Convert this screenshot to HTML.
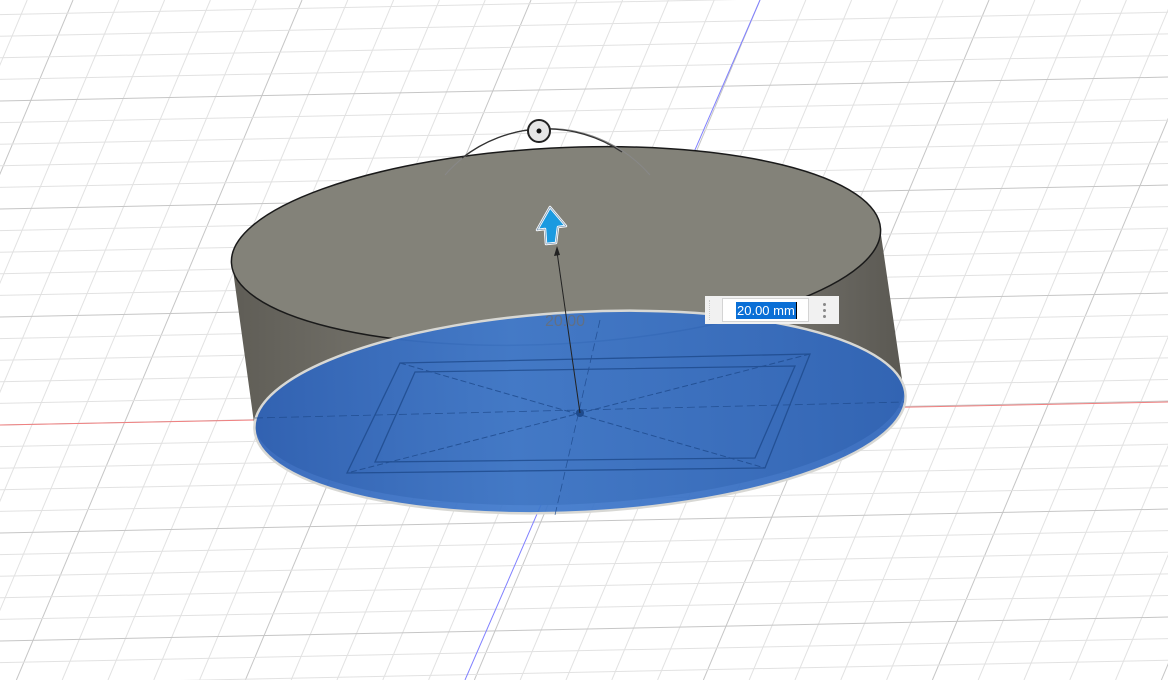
<!DOCTYPE html>
<html><head><meta charset="utf-8"><style>
html,body{margin:0;padding:0;width:1168px;height:680px;overflow:hidden;background:#fff;position:relative}
svg{position:absolute;left:0;top:0;display:block}
#box{position:absolute;left:705px;top:296px;width:134px;height:28px;background:#f1f1f1}
#fld{position:absolute;left:17px;top:2px;width:85px;height:22px;background:#fff;border:1px solid #d4d4d4}
#sel{position:absolute;left:13px;top:3px;height:17px;padding:0 1px;background:#0a6fd6;color:#fff;font:13px/17px "Liberation Sans",sans-serif;border-right:1.5px solid #000}
.d{position:absolute;left:118px;width:3px;height:3px;border-radius:50%;background:#888}
#grip{position:absolute;left:4px;top:4px;width:4px;height:20px;border-left:1px dotted #ccc}
</style></head><body>
<svg id="s" width="1168" height="680" viewBox="0 0 1168 680">
<defs>
<linearGradient id="side" x1="0" x2="1"><stop offset="0" stop-color="#5f5d56"/><stop offset="0.35" stop-color="#7e7c74"/><stop offset="0.8" stop-color="#74726b"/><stop offset="1" stop-color="#5a5852"/></linearGradient>
<linearGradient id="blue" x1="0" x2="1"><stop offset="0" stop-color="#2e62b8"/><stop offset="0.4" stop-color="#3f79cc"/><stop offset="1" stop-color="#2f65ba"/></linearGradient>
</defs>
<g id="grid"></g>
<line x1="0" y1="425" x2="1168" y2="402" stroke="#f08080" stroke-width="1"/>
<line x1="760" y1="0" x2="465" y2="680" stroke="#8080ff" stroke-width="1"/>
<path d="M232,263 L255,430 A326,100 -3 0 0 904,393 L880,228 A325,98 -3 0 1 232,263 Z" fill="url(#side)"/>
<ellipse cx="556" cy="246" rx="325" ry="98" transform="rotate(-3 556 246)" fill="#838279" stroke="#1a1a1a" stroke-width="1.5"/>
<ellipse cx="580" cy="412" rx="326" ry="100" transform="rotate(-3 580 412)" fill="url(#blue)" fill-opacity="0.93" stroke="#d8d8d4" stroke-width="2.5"/>
<g fill="none" stroke="#1e4a8c" stroke-width="1.3" opacity="0.8">
<path d="M400,363 L810,354 L765,468 L347,473 Z"/>
<path d="M415,372 L795,366 L755,458 L375,462 Z"/>
<path d="M400,363 L765,468 M810,354 L347,473" stroke-dasharray="6 3" stroke-width="1"/>
<path d="M255,418 L904,402 M600,320 L555,515" stroke-dasharray="8 4" stroke-width="0.8"/>
</g>
<circle cx="580" cy="413" r="4" fill="#1e4a8c"/>
<text x="545" y="326" font-family="Liberation Sans,sans-serif" font-size="16" fill="#6d6d6d" opacity="0.7">20.00</text>
<line x1="580" y1="413" x2="557" y2="252" stroke="#222" stroke-width="1"/>
<path d="M557,246 L554,256 L560,255 Z" fill="#222"/>
<path d="M445,175 A136,136 0 0 1 650,175" fill="none" stroke="#888" stroke-width="1"/>
<path d="M462,158 A136,136 0 0 1 622,152" fill="none" stroke="#333" stroke-width="1.3"/>
<circle cx="539" cy="131" r="11" fill="#e6e6e6" stroke="#222" stroke-width="2"/>
<circle cx="539" cy="131" r="2.5" fill="#111"/>
<path d="M550,207 L566,226 L558,227 L556,243 L546,244 L545,229 L537,230 Z" fill="#1b9ae0" stroke="#fff" stroke-width="2.5" stroke-linejoin="round"/>
<path d="M550,207 L566,226 L558,227 L556,243 L546,244 L545,229 L537,230 Z" fill="none" stroke="#2a5a8a" stroke-width="0.8" stroke-linejoin="round" opacity="0.6"/>
</svg>
<div id="box"><div id="grip"></div><div id="fld"><div id="sel">20.00 mm</div></div>
<div class="d" style="top:7px"></div><div class="d" style="top:13px"></div><div class="d" style="top:19px"></div></div>
<script>
var g=document.getElementById('grid'),h='';
var cs=45.8,sl=-0.42,rs=21.6,rsl=-0.0205;
for(var i=-30;i<40;i++){var x0=760+cs*i;var maj=((i%5)+5)%5==0;
h+='<line x1="'+x0+'" y1="0" x2="'+(x0+sl*680)+'" y2="680" stroke="'+(maj?'#c6c6c6':'#e2e2e2')+'" stroke-width="1"/>';}
for(var j=-25;j<20;j++){var y0=425+rs*j;var maj=((j%5)+5)%5==0;
h+='<line x1="0" y1="'+y0+'" x2="1168" y2="'+(y0+rsl*1168)+'" stroke="'+(maj?'#c6c6c6':'#e2e2e2')+'" stroke-width="1"/>';}
g.innerHTML=h;
</script>
</body></html>
